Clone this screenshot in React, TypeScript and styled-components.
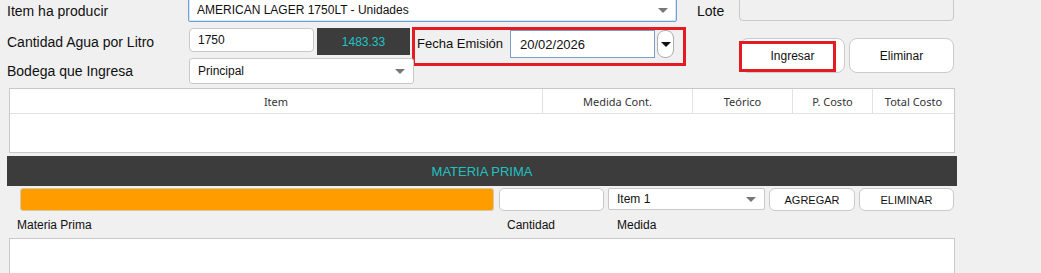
import React from 'react';
import styled, { createGlobalStyle } from 'styled-components';

const GlobalStyle = createGlobalStyle`
  html, body {
    margin: 0;
    padding: 0;
    background: #f0f0f0;
    font-family: 'Liberation Sans', Arial, sans-serif;
    overflow: hidden;
  }
`;

const Page = styled.div`
  width: 1041px;
  height: 273px;
  overflow: hidden;
  padding-left: 7px;
  box-sizing: border-box;
  display: flex;
  flex-direction: column;
`;

const Row = styled.div<{ $top: number; $h: number }>`
  display: flex;
  align-items: flex-start;
  margin-top: ${(p) => p.$top}px;
  height: ${(p) => p.$h}px;
  flex-shrink: 0;
`;

const Label = styled.div<{ $w: number; $h: number; $ml?: number }>`
  width: ${(p) => p.$w}px;
  height: ${(p) => p.$h}px;
  line-height: ${(p) => p.$h}px;
  margin-left: ${(p) => p.$ml || 0}px;
  font-size: 14px;
  color: #111;
  white-space: nowrap;
  flex-shrink: 0;
`;

const Field = styled.div<{ $w: number; $h: number; $mt?: number; $ml?: number; $radius?: number; $bg?: string }>`
  width: ${(p) => p.$w}px;
  height: ${(p) => p.$h}px;
  margin-top: ${(p) => p.$mt || 0}px;
  margin-left: ${(p) => p.$ml || 0}px;
  box-sizing: border-box;
  border: 1px solid #c8c8c8;
  border-radius: ${(p) => p.$radius ?? 4}px;
  background: ${(p) => p.$bg || '#fff'};
  display: flex;
  align-items: center;
  padding: 0 8px;
  font-size: 12px;
  color: #111;
  flex-shrink: 0;
  position: relative;
  white-space: nowrap;
`;

const FocusSelect = styled(Field)`
  border: 1px solid #6f9fd8;
  box-shadow: inset 0 0 0 1px #d6e6f8;
  border-radius: 2px;
`;

const Caret = styled.span<{ $color?: string; $right?: number }>`
  position: absolute;
  right: ${(p) => p.$right ?? 8}px;
  top: 50%;
  margin-top: -2px;
  width: 0;
  height: 0;
  border-left: 5px solid transparent;
  border-right: 5px solid transparent;
  border-top: 5px solid ${(p) => p.$color || '#777'};
`;

const DarkValue = styled.div`
  width: 93px;
  height: 27px;
  margin-top: 1px;
  margin-left: 3px;
  background: #3c3c3c;
  color: #21c4c4;
  font-size: 12px;
  display: flex;
  align-items: center;
  justify-content: center;
  flex-shrink: 0;
`;

const FechaBox = styled.div`
  width: 274px;
  height: 39px;
  margin-left: 2px;
  box-sizing: border-box;
  border: 3px solid #e31b22;
  display: flex;
  align-items: flex-start;
  flex-shrink: 0;
`;

const FechaLabel = styled.div`
  width: 93px;
  height: 28px;
  line-height: 28px;
  margin-left: 2px;
  font-size: 13px;
  color: #111;
  white-space: nowrap;
`;

const DateInput = styled.div`
  width: 145px;
  height: 28px;
  box-sizing: border-box;
  border: 1px solid #7d9ec4;
  background: #fff;
  display: flex;
  align-items: center;
  padding-left: 9px;
  font-size: 13px;
  color: #111;
`;

const DateButton = styled.div`
  width: 17px;
  height: 28px;
  margin-left: 2px;
  box-sizing: border-box;
  border: 1px solid #adadad;
  border-radius: 8px;
  background: #fff;
  position: relative;
`;

const ButtonGroup = styled.div`
  display: flex;
  gap: 4px;
  margin-left: 54px;
  margin-top: 11px;
`;

const Button = styled.div<{ $w: number; $h: number; $radius?: number; $size?: number }>`
  width: ${(p) => p.$w}px;
  height: ${(p) => p.$h}px;
  box-sizing: border-box;
  border: 1px solid #cacaca;
  border-radius: ${(p) => p.$radius ?? 8}px;
  background: #fff;
  display: flex;
  align-items: center;
  justify-content: center;
  font-size: ${(p) => p.$size || 12}px;
  color: #111;
  position: relative;
  flex-shrink: 0;
`;

const Highlight = styled.span`
  position: absolute;
  left: -2px;
  top: 2px;
  width: 97px;
  height: 31px;
  box-sizing: border-box;
  border: 3px solid #e31b22;
`;

const Table = styled.div`
  margin-top: 4px;
  margin-left: 2px;
  width: 946px;
  height: 65px;
  box-sizing: border-box;
  border: 1px solid #c8c8c8;
  background: #fff;
  flex-shrink: 0;
`;

const HeadRow = styled.div`
  display: grid;
  grid-template-columns: 533px 150px 100px 80px 1fr;
  height: 25px;
  border-bottom: 1px solid #e2e2e2;
  box-sizing: border-box;
`;

const HeadCell = styled.div<{ $last?: boolean }>`
  display: flex;
  align-items: center;
  justify-content: center;
  font-family: 'Noto Sans', 'Liberation Sans', sans-serif;
  font-size: 11px;
  color: #333;
  border-right: ${(p) => (p.$last ? 'none' : '1px solid #e2e2e2')};
`;

const SectionBar = styled.div`
  margin-top: 3px;
  width: 950px;
  height: 30px;
  background: #3c3c3c;
  color: #1fc2c2;
  font-size: 13px;
  display: flex;
  align-items: center;
  justify-content: center;
  flex-shrink: 0;
`;

const ToolRow = styled.div`
  display: flex;
  align-items: flex-start;
  gap: 4px;
  margin-top: 2px;
  margin-left: 13px;
  height: 23px;
  flex-shrink: 0;
`;

const OrangeBar = styled.div`
  width: 474px;
  height: 23px;
  margin-right: 1px;
  box-sizing: border-box;
  border: 1px solid #d8c8a8;
  border-radius: 3px;
  background: #ff9c00;
`;

const ColumnLabels = styled.div`
  display: grid;
  grid-template-columns: 490px 110px 1fr;
  margin-left: 10px;
  margin-top: 4px;
  height: 20px;
  align-items: center;
  font-size: 12px;
  color: #111;
  flex-shrink: 0;
`;

const ListBox = styled.div`
  margin-top: 3px;
  margin-left: 2px;
  width: 946px;
  height: 60px;
  box-sizing: border-box;
  border: 1px solid #c8c8c8;
  background: #fff;
  flex-shrink: 0;
`;

const App = () => {
  return (
    <>
      <GlobalStyle />
      <Page>
        <Row $top={-3} $h={25}>
          <Label $w={181} $h={28}>Item ha producir</Label>
          <FocusSelect $w={489} $h={25}>
            AMERICAN LAGER 1750LT - Unidades
            <Caret />
          </FocusSelect>
          <Label $w={42} $h={28} $ml={20}>Lote</Label>
          <Field $w={215} $h={24} $bg="#f0f0f0" />
        </Row>

        <Row $top={5} $h={31}>
          <Label $w={182} $h={31}>Cantidad Agua por Litro</Label>
          <Field $w={125} $h={24} $mt={1}>1750</Field>
          <DarkValue>1483.33</DarkValue>
          <FechaBox>
            <FechaLabel>Fecha Emisión</FechaLabel>
            <DateInput>20/02/2026</DateInput>
            <DateButton>
              <Caret $color="#111" $right={2} />
            </DateButton>
          </FechaBox>
          <ButtonGroup>
            <Button $w={105} $h={35}>
              Ingresar
              <Highlight />
            </Button>
            <Button $w={105} $h={35}>Eliminar</Button>
          </ButtonGroup>
        </Row>

        <Row $top={0} $h={26}>
          <Label $w={182} $h={27}>Bodega que Ingresa</Label>
          <Field $w={225} $h={26} $radius={3}>
            Principal
            <Caret />
          </Field>
        </Row>

        <Table>
          <HeadRow>
            <HeadCell>Item</HeadCell>
            <HeadCell>Medida Cont.</HeadCell>
            <HeadCell>Teórico</HeadCell>
            <HeadCell>P. Costo</HeadCell>
            <HeadCell $last>Total Costo</HeadCell>
          </HeadRow>
        </Table>

        <SectionBar>MATERIA PRIMA</SectionBar>

        <ToolRow>
          <OrangeBar />
          <Field $w={105} $h={23} $radius={5} />
          <Field $w={157} $h={22} $radius={2}>
            Item 1
            <Caret />
          </Field>
          <Button $w={86} $h={23} $radius={6} $size={11}>AGREGAR</Button>
          <Button $w={95} $h={23} $radius={6} $size={11}>ELIMINAR</Button>
        </ToolRow>

        <ColumnLabels>
          <span>Materia Prima</span>
          <span>Cantidad</span>
          <span>Medida</span>
        </ColumnLabels>

        <ListBox />
      </Page>
    </>
  );
};

export default App;
